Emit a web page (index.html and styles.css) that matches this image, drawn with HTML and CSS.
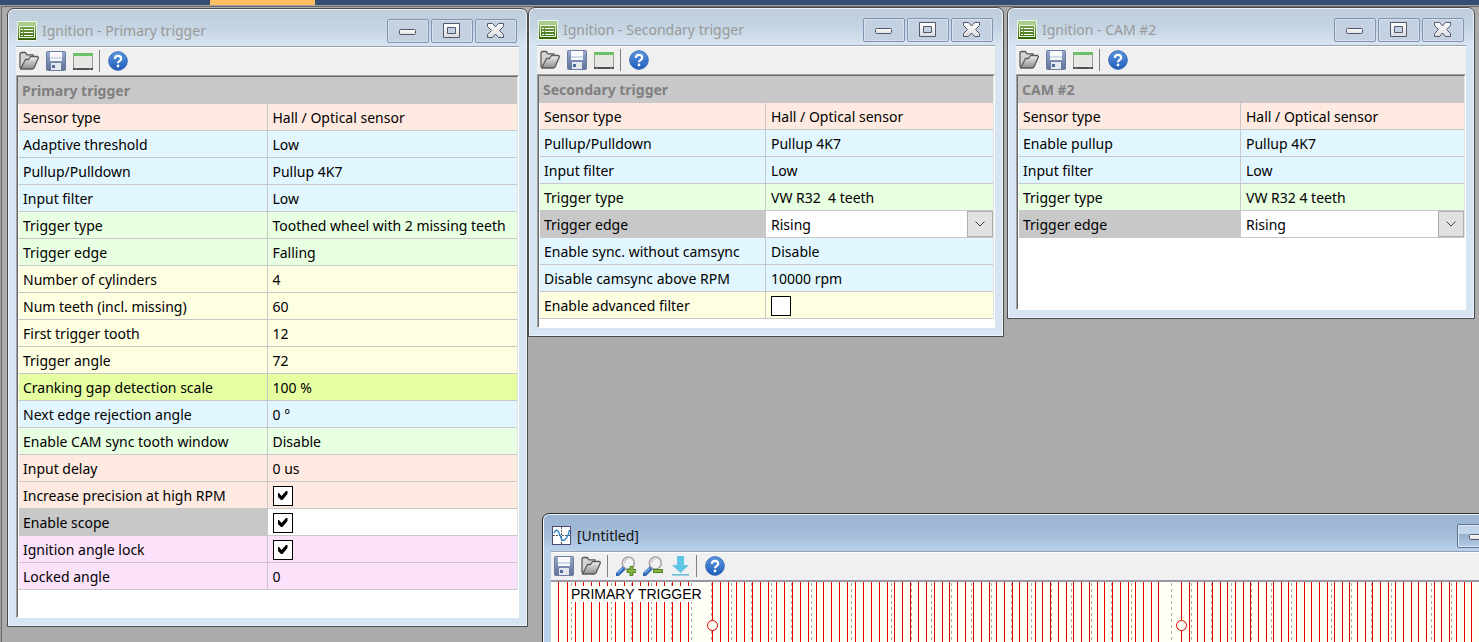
FILE: index.html
```html
<!DOCTYPE html>
<html lang="en">
<head>
<meta charset="utf-8">
<title>Ignition setup</title>
<link rel="stylesheet" href="styles.css">
</head>
<body>
<svg class="sprites" aria-hidden="true">
  <defs>
    <linearGradient id="g-form" x1="0" y1="0" x2="0" y2="1"><stop offset="0" stop-color="#8fb96c"/><stop offset="1" stop-color="#336300"/></linearGradient>
    <linearGradient id="g-fold" x1="0" y1="0" x2="0" y2="1"><stop offset="0" stop-color="#f2f2f2"/><stop offset="1" stop-color="#8c8c8c"/></linearGradient>
    <linearGradient id="g-disk" x1="0" y1="0" x2="0" y2="1"><stop offset="0" stop-color="#98a9cc"/><stop offset="1" stop-color="#5f7298"/></linearGradient>
    <linearGradient id="g-help" x1="0" y1="0" x2="0" y2="1"><stop offset="0" stop-color="#5c96df"/><stop offset="1" stop-color="#1f5dbb"/></linearGradient>
    <linearGradient id="g-glyph" x1="0" y1="0" x2="0" y2="1"><stop offset="0" stop-color="#ffffff"/><stop offset="1" stop-color="#dcdcdc"/></linearGradient>
    <symbol id="i-form" viewBox="0 0 20 20">
      <rect width="20" height="20" fill="#eef6e6"/><rect x="1" y="1" width="18" height="18" fill="url(#g-form)"/>
      <rect x="1" y="1" width="18" height="4" fill="#a9cd8c"/>
      <path d="M2 5.500h16M2.500 5.500v11M17.500 5.500v11M2 16.500h16" stroke="#e9f3df" fill="none"/>
      <path d="M4 8.500h2M7 8.500h9M4 11.500h2M7 11.500h9M4 14.500h2M7 14.500h9" stroke="#fff" stroke-width="1.200"/>
    </symbol>
    <symbol id="i-wave" viewBox="0 0 20 20">
      <rect x=".5" y=".5" width="18" height="18" fill="#fff" stroke="#4b4a70"/>
      <path d="M9.500 1v17M1 9.500h17" stroke="#555" stroke-dasharray="2 1"/>
      <path d="M2 7q2.500-5 4.500-1t3 7 4 0 4-9" stroke="#2f86c8" stroke-width="1.500" fill="none"/>
    </symbol>
    <symbol id="i-open" viewBox="0 0 20 20">
      <path d="M1 17V3q0-1.500 1.500-1.500h3.800L8 3.800h6V7" fill="#d4d4d4" stroke="#5a5a5a" stroke-width="1.300"/>
      <path d="M1.500 18l5-9.500h3l2-3h7l1 1-4.500 10.500-1.500 1z" fill="url(#g-fold)" stroke="#5a5a5a" stroke-width="1.300" stroke-linejoin="round"/>
    </symbol>
    <symbol id="i-save" viewBox="0 0 20 20">
      <rect x=".5" y=".5" width="19" height="19" rx="1" fill="url(#g-disk)" stroke="#6b7da3"/>
      <rect x="4" y="1" width="12" height="9" fill="#f7f9fc"/><rect x="4" y="6" width="12" height="2" fill="#d3dae7"/>
      <rect x="5" y="12" width="10" height="7" fill="#e4e7ec"/><rect x="6" y="14" width="3" height="3" fill="#4f6b9e"/>
    </symbol>
    <symbol id="i-panel" viewBox="0 0 20 20">
      <rect x="0" y="2" width="20" height="15" fill="#9a9a9a"/><rect x="1" y="5" width="18" height="12" fill="#e6e6e2"/>
      <rect x="0" y="2" width="20" height="3" fill="#6cc067"/><rect x="0" y="17" width="20" height="2" fill="#505050"/>
      <path d="M2 18h2M16 18h2" stroke="#888"/>
    </symbol>
    <symbol id="i-help" viewBox="0 0 20 20">
      <circle cx="10" cy="10" r="9.300" fill="url(#g-help)" stroke="#3569b5"/>
      <path d="M6.800 7.800Q7 4.900 10 4.900t3.200 2.700q0 1.600-1.700 2.500-1.500.8-1.500 2.200" stroke="#fff" stroke-width="2.200" fill="none"/>
      <circle cx="10" cy="15" r="1.400" fill="#fff"/>
    </symbol>
    <symbol id="i-lens" viewBox="0 0 20 20">
      <path d="M1.500 18.500l6.500-6.500" stroke="#2b65b5" stroke-width="4" stroke-linecap="round"/>
      <path d="M1.800 17.200l5-5" stroke="#7fb0ee" stroke-width="1.300"/>
      <circle cx="12.300" cy="7" r="6" fill="#f4f4f4" stroke="#a5a5a5" stroke-width="1.600"/>
      <path d="M8.500 7q.3-3.500 3.800-3.800" stroke="#c9c9c9" stroke-width="1.300" fill="none"/>
    </symbol>
    <symbol id="i-zoomin" viewBox="0 0 20 20">
      <use href="#i-lens"/>
      <path d="M14 10.500h3v3h3v3h-3v3h-3v-3h-3v-3h3z" fill="#84b843" stroke="#4f8420"/>
    </symbol>
    <symbol id="i-zoomout" viewBox="0 0 20 20">
      <use href="#i-lens"/><rect x="10.500" y="13.500" width="9" height="3" fill="#84b843" stroke="#4f8420"/>
    </symbol>
    <symbol id="i-down" viewBox="0 0 20 20">
      <path d="M7 0h7v9h5l-8.500 8L2 9h5z" fill="#5fc4e6"/><path d="M2 18.800h17" stroke="#5fb9d8" stroke-width="1.500"/>
    </symbol>
    <symbol id="i-min" viewBox="0 0 40 22"><rect x="11.500" y="9.500" width="16" height="5" rx="1" fill="url(#g-glyph)" stroke="#54586e"/></symbol>
    <symbol id="i-max" viewBox="0 0 40 22">
      <path fill-rule="evenodd" d="M11.500 3.500h16v14h-16zM15.500 7.500v6h8v-6z" fill="url(#g-glyph)" stroke="#54586e" stroke-linejoin="round"/>
    </symbol>
    <symbol id="i-close" viewBox="0 0 40 22">
      <path d="M11.500 3.500h5l3 3.500 3-3.500h5v3l-4 4 4 4v3h-5l-3-3.500-3 3.500h-5v-3l4-4-4-4z" fill="url(#g-glyph)" stroke="#54586e" stroke-linejoin="round"/>
    </symbol>
  </defs>
</svg>

<div class="tabstrip"><span class="tab-marker"></span></div>
<main class="desktop">

  <section class="window win-primary">
    <header class="titlebar">
      <svg class="app-icon"><use href="#i-form"/></svg><h2 class="title">Ignition - Primary trigger</h2>
      <button class="cap" aria-label="Minimize"><svg><use href="#i-min"/></svg></button>
      <button class="cap" aria-label="Maximize"><svg><use href="#i-max"/></svg></button>
      <button class="cap" aria-label="Close"><svg><use href="#i-close"/></svg></button>
    </header>
    <div class="toolbar">
      <button class="tool" aria-label="Open"><svg><use href="#i-open"/></svg></button>
      <button class="tool" aria-label="Save"><svg><use href="#i-save"/></svg></button>
      <button class="tool" aria-label="Panel"><svg><use href="#i-panel"/></svg></button>
      <span class="sep"></span>
      <button class="tool" aria-label="Help"><svg><use href="#i-help"/></svg></button>
    </div>
    <div class="client">
      <table class="props">
        <thead><tr><th colspan="2">Primary trigger</th></tr></thead>
        <tbody>
          <tr class="peach"><td>Sensor type</td><td>Hall / Optical sensor</td></tr>
          <tr class="blue"><td>Adaptive threshold</td><td>Low</td></tr>
          <tr class="blue"><td>Pullup/Pulldown</td><td>Pullup 4K7</td></tr>
          <tr class="blue"><td>Input filter</td><td>Low</td></tr>
          <tr class="green"><td>Trigger type</td><td>Toothed wheel with 2 missing teeth</td></tr>
          <tr class="green"><td>Trigger edge</td><td>Falling</td></tr>
          <tr class="yellow"><td>Number of cylinders</td><td>4</td></tr>
          <tr class="yellow"><td>Num teeth (incl. missing)</td><td>60</td></tr>
          <tr class="yellow"><td>First trigger tooth</td><td>12</td></tr>
          <tr class="yellow"><td>Trigger angle</td><td>72</td></tr>
          <tr class="lime"><td>Cranking gap detection scale</td><td>100 %</td></tr>
          <tr class="blue"><td>Next edge rejection angle</td><td>0 °</td></tr>
          <tr class="green"><td>Enable CAM sync tooth window</td><td>Disable</td></tr>
          <tr class="peach"><td>Input delay</td><td>0 us</td></tr>
          <tr class="peach"><td><label for="precision">Increase precision at high RPM</label></td><td><input class="check" type="checkbox" id="precision" checked></td></tr>
          <tr class="selected"><td><label for="scope">Enable scope</label></td><td><input class="check" type="checkbox" id="scope" checked></td></tr>
          <tr class="pink"><td><label for="lock">Ignition angle lock</label></td><td><input class="check" type="checkbox" id="lock" checked></td></tr>
          <tr class="pink"><td>Locked angle</td><td>0</td></tr>
        </tbody>
      </table>
    </div>
  </section>

  <section class="window win-secondary">
    <header class="titlebar">
      <svg class="app-icon"><use href="#i-form"/></svg><h2 class="title">Ignition - Secondary trigger</h2>
      <button class="cap" aria-label="Minimize"><svg><use href="#i-min"/></svg></button>
      <button class="cap" aria-label="Maximize"><svg><use href="#i-max"/></svg></button>
      <button class="cap" aria-label="Close"><svg><use href="#i-close"/></svg></button>
    </header>
    <div class="toolbar">
      <button class="tool" aria-label="Open"><svg><use href="#i-open"/></svg></button>
      <button class="tool" aria-label="Save"><svg><use href="#i-save"/></svg></button>
      <button class="tool" aria-label="Panel"><svg><use href="#i-panel"/></svg></button>
      <span class="sep"></span>
      <button class="tool" aria-label="Help"><svg><use href="#i-help"/></svg></button>
    </div>
    <div class="client">
      <table class="props">
        <thead><tr><th colspan="2">Secondary trigger</th></tr></thead>
        <tbody>
          <tr class="peach"><td>Sensor type</td><td>Hall / Optical sensor</td></tr>
          <tr class="blue"><td>Pullup/Pulldown</td><td>Pullup 4K7</td></tr>
          <tr class="blue"><td>Input filter</td><td>Low</td></tr>
          <tr class="green"><td>Trigger type</td><td class="pre">VW R32  4 teeth</td></tr>
          <tr class="selected"><td><label for="edge2">Trigger edge</label></td><td class="field"><div class="combo"><select id="edge2"><option>Rising</option><option>Falling</option></select><span class="arrow"><svg viewBox="0 0 12 8"><path d="M1.500 1.500L6 6l4.500-4.500"/></svg></span></div></td></tr>
          <tr class="blue"><td>Enable sync. without camsync</td><td>Disable</td></tr>
          <tr class="blue"><td>Disable camsync above RPM</td><td>10000 rpm</td></tr>
          <tr class="yellow"><td><label for="advanced">Enable advanced filter</label></td><td><input class="check" type="checkbox" id="advanced"></td></tr>
        </tbody>
      </table>
    </div>
  </section>

  <section class="window win-cam">
    <header class="titlebar">
      <svg class="app-icon"><use href="#i-form"/></svg><h2 class="title">Ignition - CAM #2</h2>
      <button class="cap" aria-label="Minimize"><svg><use href="#i-min"/></svg></button>
      <button class="cap" aria-label="Maximize"><svg><use href="#i-max"/></svg></button>
      <button class="cap" aria-label="Close"><svg><use href="#i-close"/></svg></button>
    </header>
    <div class="toolbar">
      <button class="tool" aria-label="Open"><svg><use href="#i-open"/></svg></button>
      <button class="tool" aria-label="Save"><svg><use href="#i-save"/></svg></button>
      <button class="tool" aria-label="Panel"><svg><use href="#i-panel"/></svg></button>
      <span class="sep"></span>
      <button class="tool" aria-label="Help"><svg><use href="#i-help"/></svg></button>
    </div>
    <div class="client">
      <table class="props">
        <thead><tr><th colspan="2">CAM #2</th></tr></thead>
        <tbody>
          <tr class="peach"><td>Sensor type</td><td>Hall / Optical sensor</td></tr>
          <tr class="blue"><td>Enable pullup</td><td>Pullup 4K7</td></tr>
          <tr class="blue"><td>Input filter</td><td>Low</td></tr>
          <tr class="green"><td>Trigger type</td><td>VW R32 4 teeth</td></tr>
          <tr class="selected"><td><label for="edge3">Trigger edge</label></td><td class="field"><div class="combo"><select id="edge3"><option>Rising</option><option>Falling</option></select><span class="arrow"><svg viewBox="0 0 12 8"><path d="M1.500 1.500L6 6l4.500-4.500"/></svg></span></div></td></tr>
        </tbody>
      </table>
    </div>
  </section>

  <section class="window active win-scope">
    <header class="titlebar">
      <svg class="app-icon"><use href="#i-wave"/></svg><h2 class="title">[Untitled]</h2>
      <button class="cap" aria-label="Minimize"><svg><use href="#i-min"/></svg></button>
      <button class="cap" aria-label="Maximize"><svg><use href="#i-max"/></svg></button>
      <button class="cap" aria-label="Close"><svg><use href="#i-close"/></svg></button>
    </header>
    <div class="toolbar">
      <button class="tool" aria-label="Save"><svg><use href="#i-save"/></svg></button>
      <button class="tool" aria-label="Open"><svg><use href="#i-open"/></svg></button>
      <span class="sep"></span>
      <button class="tool" aria-label="Zoom in"><svg><use href="#i-zoomin"/></svg></button>
      <button class="tool" aria-label="Zoom out"><svg><use href="#i-zoomout"/></svg></button>
      <button class="tool" aria-label="Download"><svg><use href="#i-down"/></svg></button>
      <span class="sep"></span>
      <button class="tool" aria-label="Help"><svg><use href="#i-help"/></svg></button>
    </div>
    <div class="plot">
      <svg class="trace" id="trace"></svg>
      <span class="channel">PRIMARY TRIGGER</span>
    </div>
  </section>
</main>
<script src="trace.js"></script>
</body>
</html>
```
FILE: styles.css
```css
* { box-sizing: border-box; }

body {
  margin: 0;
  height: 100vh;
  display: flex;
  flex-direction: column;
  overflow: hidden;
  font: 14px/20px "Noto Sans", "Open Sans", sans-serif;
  color: #000;
}

.sprites { position: absolute; width: 0; height: 0; }

button { padding: 0; border: 0; background: none; font: inherit; }

.tabstrip { height: 5px; flex: none; display: flex; padding-left: 210px; background: #364e6f; }
.tab-marker { width: 105px; background: #ffbe5f; }

.desktop {
  position: relative;
  flex: 1;
  overflow: hidden;
  background: #ababab;
  border-left: 1px solid #a0a0a0;
  border-top: 1px solid #a0a0a0;
  box-shadow: inset 1px 1px #696969;
}

.window {
  position: absolute;
  display: flex;
  flex-direction: column;
  padding: 0 8px 8px;
  border: 1px solid #4b4b4b;
  border-radius: 7px 7px 0 0;
  background: linear-gradient(#bfcddb, #c6d5e3 20px, #d7e4f2 36px);
  box-shadow: inset 0 0 0 1px #edf4fb;
}
.window.active {
  border-color: #2b2b2b;
  background: linear-gradient(#99b4d1, #a3bcd8 20px, #b9d1ea 36px);
  box-shadow: inset 0 0 0 1px #f4f9ff;
}

.win-primary { left: 6px; top: 2px; width: 521px; height: 619px; }
.win-secondary { left: 527px; top: 1px; width: 476px; height: 330px; }
.win-cam { left: 1006px; top: 1px; width: 468px; height: 312px; }
.win-scope { left: 541px; top: 507px; width: 1056px; height: 400px; }

.titlebar {
  flex: none;
  display: flex;
  align-items: center;
  gap: 2px;
  height: 37px;
  padding: 7px 2px 0 1px;
}
.app-icon { flex: none; width: 20px; height: 20px; }
.title { flex: 1; margin: 0; padding-left: 3px; font-size: 14px; font-weight: 400; color: #999; }
.active .title { color: #111; }

.cap {
  width: 42px;
  height: 24px;
  border: 1px solid #8494b0;
  border-radius: 2px;
  background: #c3d1e1;
  box-shadow: inset 0 0 0 1px #d3dfec;
}
.cap svg { display: block; width: 40px; height: 22px; }
.active .cap {
  border-color: #5f7594;
  background: linear-gradient(#c3d5e9 40%, #96b0cd 41%, #b3cde8);
  box-shadow: inset 0 0 0 1px #dce9f6;
}

.toolbar {
  flex: none;
  display: flex;
  align-items: center;
  height: 29px;
  padding: 0 3px;
  border-top: 1px solid #98a2b1;
  background: #f0f0f0;
  box-shadow: inset 0 1px #fff;
}
.tool { width: 20px; height: 20px; }
.tool + .tool { margin-left: 7px; }
.tool svg { display: block; width: 20px; height: 20px; }
.sep { width: 1px; height: 22px; margin: 0 8px 0 6px; background: #808080; }

.client {
  flex: 1;
  min-height: 0;
  border: 1px solid;
  border-color: #a0a0a0 #fff #fff #a0a0a0;
  background: #fff;
  display: flex;
}
.client::before { content: ""; width: 1px; background: #696969; }

.props {
  flex: 1;
  align-self: flex-start;
  table-layout: fixed;
  border-collapse: separate;
  border-spacing: 0;
  border-top: 1px solid #696969;
  border-right: 1px solid #e3e3e3;
}
.props th, .props td { height: 27px; padding: 0 4px; text-align: left; white-space: nowrap; }
.props th { width: 100%; background: #c8c8c8; color: #808080; font-weight: 700; }
.props td { padding-top: 2px; border-bottom: 1px solid #c8c8c8; }
.props td:first-child { width: 50%; border-left: 1px solid #fff; border-right: 1px solid #c8c8c8; }
.props td + td { padding-left: 5px; }
.props .pre { white-space: pre; }
.props .field { padding: 0; }

.peach { background: #ffeae1; }
.blue { background: #e1f6ff; }
.green { background: #e8ffe1; }
.yellow { background: #feffe1; }
.lime { background: #e6ffa1; }
.pink { background: #fce1fb; }
.selected td:first-child { background: #c8c8c8; }

.check {
  appearance: none;
  display: block;
  width: 20px;
  height: 20px;
  margin: 0;
  padding: 4px;
  border: 1px solid #000;
  background: #fff;
}
.check:checked::before {
  content: "";
  display: block;
  width: 10px;
  height: 10px;
  background: #000;
  clip-path: polygon(0 20%, 15% 20%, 40% 50%, 85% 0, 100% 0, 100% 30%, 50% 90%, 35% 90%, 0 55%);
}

.combo { display: grid; grid-template-columns: 1fr 26px; height: 26px; }
.combo select {
  grid-area: 1 / 1 / 2 / 3;
  appearance: none;
  padding: 2px 5px 0;
  border: 0;
  border-radius: 0;
  background: #fff;
  color: #000;
  font: inherit;
}
.arrow {
  grid-area: 1 / 2;
  display: grid;
  place-items: center;
  border: 1px solid #adadad;
  background: #e1e1e1;
  pointer-events: none;
}
.arrow svg { width: 12px; height: 8px; fill: none; stroke: #444; }

.plot {
  position: relative;
  flex: 1;
  border-top: 2px solid #9898a4;
  background: #fffff5;
}
.trace { display: block; width: 100%; height: 100%; }
.trace path { fill: none; shape-rendering: crispEdges; }
.trace .grid { stroke: #acacac; stroke-dasharray: 3 3; }
.trace .tooth { stroke: #e60000; }
.trace circle { fill: #fffff5; stroke: #e60000; }
.channel {
  position: absolute;
  left: 20px;
  top: 4px;
  padding-right: 2px;
  background: #fffffb;
  font: 14px/16px "Liberation Sans", Arial, sans-serif;
}
```
FILE: trace.js
```js
// Tooth edges by revolution; each revolution starts at the gap marker.
const previous = [7, 16, 24, 32, 40, 48, 56, 64, 73, 81, 89, 97, 105, 113, 121, 129, 137];
const first = [
  161, 169, 177, 185, 193, 201, 209, 217, 225, 233, 241, 249, 257, 265, 272, 280, 288, 296,
  304, 312, 320, 328, 336, 343, 351, 359, 367, 375, 383, 391, 398, 406, 414, 422, 430, 438,
  445, 453, 461, 468, 476, 484, 491, 499, 507, 515, 522, 530, 538, 546, 553, 561, 569, 577,
  584, 592, 600, 607
];
const second = [
  630, 638, 646, 653, 661, 669, 676, 684, 692, 699, 707, 715, 722, 730, 737, 745, 753, 760,
  768, 776, 783, 791, 798, 806, 814, 821, 829, 837, 844, 852, 860, 867, 875, 883, 890, 898,
  905, 913, 920
];
const markers = [first[0], second[0]];
const height = 400;
const vertical = (x, y) => `M${x + 0.5} ${y}V${height}`;

let grid = "";
for (let x = 20; x < 1040; x += 20) grid += vertical(x, 1);
const teeth = [...previous, ...first, ...second].map(x => vertical(x, 0)).join("");

document.getElementById("trace").innerHTML =
  `<path class="grid" d="${grid}"/><path class="tooth" d="${teeth}"/>` +
  markers.map(x => `<circle cx="${x + 0.5}" cy="43.500" r="5"/>`).join("");
```
